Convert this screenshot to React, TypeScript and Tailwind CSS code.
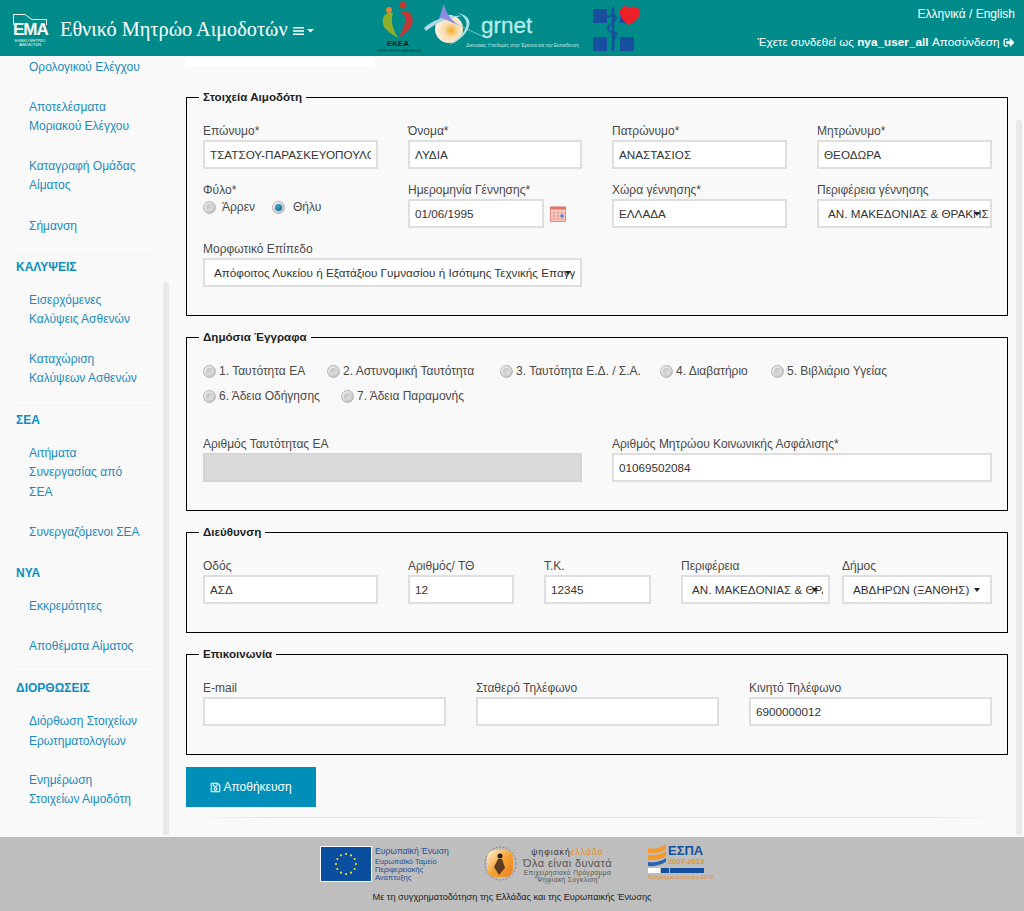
import React from "react";
import { FaRegSave, FaSignOutAlt } from "react-icons/fa";

const SideHead = ({ t, cls }: { t: string; cls: string }) => (
  <div className={`font-bold text-[12px] leading-[18px] text-[#0a8fc0] pl-[16px] ${cls}`}>{t}</div>
);
const SideLink = ({ lines, cls }: { lines: string[]; cls: string }) => (
  <div className={`pl-[29px] text-[12px] leading-[19.4px] text-[#1a8cbc] ${cls}`}>
    {lines.map((l) => (
      <div key={l}>{l}</div>
    ))}
  </div>
);
const Hr = ({ cls }: { cls: string }) => <div className={`ml-[15px] mr-[20px] h-px bg-white ${cls}`} />;

const Label = ({ children }: { children: React.ReactNode }) => (
  <div className="text-[12px] leading-[18px] text-[#4a4a4a] h-[18px] whitespace-nowrap">{children}</div>
);

const inputCls =
  "block w-full h-[29px] border-2 border-[#dedede] bg-white px-[5px] text-[11.7px] text-[#333] outline-none";

const Field = ({ label, value, cls = "" }: { label: string; value: string; cls?: string }) => (
  <div className={cls}>
    <Label>{label}</Label>
    <input readOnly value={value} className={inputCls} />
  </div>
);

const Sel = ({ label, value, cls = "", caretRight = 9, pad = 9, clip = 5 }: { label: string; value: string; cls?: string; caretRight?: number; pad?: number; clip?: number }) => (
  <div className={cls}>
    <Label>{label}</Label>
    <div className="relative h-[29px] border-2 border-[#dedede] bg-white text-[11.7px] leading-[25px] text-[#333]" style={{ paddingLeft: pad, paddingRight: clip }}>
      <div className="overflow-hidden whitespace-nowrap">{value}</div>
      <span
        className="absolute top-[11px] w-0 h-0 border-l-[3px] border-r-[3px] border-t-[4px] border-l-transparent border-r-transparent border-t-[#222]"
        style={{ right: caretRight }}
      />
    </div>
  </div>
);

const Radio = ({ on = false }: { on?: boolean }) => (
  <span className="inline-flex shrink-0 w-[13px] h-[13px] rounded-full items-center justify-center border border-[#b4b4b4] bg-[linear-gradient(135deg,#f4f4f4,#bcbcbc)]">
    <span
      className={
        on
          ? "w-[7px] h-[7px] rounded-full bg-[radial-gradient(circle_at_40%_35%,#3aa6d0,#0a5f85)]"
          : "w-[7px] h-[7px] rounded-full bg-[linear-gradient(135deg,#bdbdbd,#e6e6e6)]"
      }
    />
  </span>
);

const DocRadio = ({ t, w }: { t: string; w: string }) => (
  <div className={`flex items-center gap-[3px] text-[12px] text-[#4a4a4a] whitespace-nowrap ${w}`}>
    <Radio />
    <span>{t}</span>
  </div>
);

const Fs = ({ title, cls, children }: { title: string; cls: string; children: React.ReactNode }) => (
  <fieldset className={`border border-black pl-[16px] pr-[15px] ${cls}`}>
    <legend className="ml-[-4px] px-[4px] text-[11.6px] leading-[16px] font-bold text-[#222]">{title}</legend>
    {children}
  </fieldset>
);

const CalIcon = () => (
  <svg width="17" height="16" viewBox="0 0 17 16" className="shrink-0">
    <rect x="0.5" y="1.5" width="15" height="14" fill="#fbd8d0" stroke="#e08a80" />
    <rect x="0.5" y="0.5" width="15" height="3" fill="#e0705f" />
    <path d="M4 4v11M8 4v11M12 4v11M1 7h14M1 10h14M1 13h14" stroke="#ec9c90" strokeWidth="1" />
    <rect x="10.5" y="8.5" width="3" height="3" fill="#4a7fe0" />
  </svg>
);

const Ekea = () => (
  <svg width="44" height="54" viewBox="0 0 44 54" className="shrink-0">
    <g transform="translate(2 0)">
      <circle cx="10" cy="9" r="3" fill="#e9862c" />
      <circle cx="24" cy="4" r="3.5" fill="#c0392b" />
      <path d="M5 15c-4 8 1 15 14 22C14 27 11 21 14 12c-4-1-7 0-9 3z" fill="#8fae2a" />
      <path d="M19 37c11-6 17-13 14-22-2-5-8-6-12-3 4 1 6 4 5 9-1 6-4 11-7 16z" fill="#c23a3a" />
    </g>
    <text x="21" y="45" textAnchor="middle" fontFamily="Liberation Sans" fontWeight="700" fontSize="8" fill="#10201a">ΕΚΕΑ</text>
    <text x="22" y="51" textAnchor="middle" fontFamily="Liberation Sans" fontSize="3.2" fill="#10302a">ΕΘΝΙΚΟ ΚΕΝΤΡΟ ΑΙΜΟΔΟΣΙΑΣ</text>
  </svg>
);

const Grnet = () => (
  <svg width="160" height="50" viewBox="0 0 160 50" className="shrink-0">
    <defs>
      <radialGradient id="sun" cx="0.58" cy="0.55" r="0.55">
        <stop offset="0" stopColor="#f2a91e" />
        <stop offset="0.45" stopColor="#fbdcae" />
        <stop offset="1" stopColor="#fdf0e0" />
      </radialGradient>
    </defs>
    <circle cx="25" cy="28" r="14" fill="url(#sun)" />
    <path d="M0 27c8-8 25-13 38-12-14 2-26 7-36 15z" fill="#a8d8e8" />
    <path d="M20 3c2 10 8 18 19 23C26 22 19 15 15 18 17 12 18 7 20 3z" fill="#8c8ce0" />
    <path d="M34 12c10 2 14 8 10 16-3 6-9 12-19 16 9-6 15-12 17-18 2-6-2-11-8-14z" fill="#a8dfe8" />
    <path d="M30 22l30 14" stroke="#bfe8e8" strokeWidth="0.6" />
    <text x="57" y="32" fontFamily="Liberation Sans" fontSize="22.5" fill="#b6ecea" stroke="#b6ecea" strokeWidth="0.3">grnet</text>
    <text x="42" y="46" fontFamily="Liberation Sans" fontSize="4.7" fill="#c5e8e4">Δικτυακές Υποδομές στην Έρευνα και την Εκπαίδευση</text>
  </svg>
);

const Ministry = () => (
  <svg width="48" height="50" viewBox="0 0 48 50" className="shrink-0">
    <rect x="0" y="8" width="14" height="14" fill="#174f9e" />
    <rect x="27" y="8" width="14" height="14" fill="#174f9e" />
    <rect x="0" y="36" width="14" height="14" fill="#174f9e" />
    <rect x="27" y="36" width="14" height="14" fill="#174f9e" />
    <path d="M20 6v44" stroke="#174f9e" strokeWidth="2.5" />
    <path d="M14 16c8-4 12 0 6 5s-8 9 0 10-2 8 0 12" stroke="#174f9e" strokeWidth="2" fill="none" />
    <path d="M36 24c-5-4-9-7-9-13 0-5 6-8 9-4 3-2 11-2 11 4 0 6-6 10-11 13z" fill="#ee2027" />
  </svg>
);

const Footer = () => (
  <div className="h-[74px] bg-[#bebebe] flex flex-col items-center shrink-0">
    <div className="flex h-[38px] mt-[9px] w-[384px] items-start">
      <div className="w-[52px] h-[36px] bg-[#0a4ea0] border border-white flex items-center justify-center shrink-0">
        <svg width="26" height="26" viewBox="0 0 26 26">
          {Array.from({ length: 12 }).map((_, i) => (
            <circle key={i} cx={13 + 10 * Math.cos((i * Math.PI) / 6)} cy={13 + 10 * Math.sin((i * Math.PI) / 6)} r="1.1" fill="#f7e01a" />
          ))}
        </svg>
      </div>
      <div className="ml-[3px] w-[78px] shrink-0 text-[#1c4f96] leading-[8px] text-[7.5px]">
        <div className="text-[8.6px] leading-[10px] mb-[2px] whitespace-nowrap">Ευρωπαϊκή Ένωση</div>
        <div>Ευρωπαϊκό Ταμείο</div>
        <div>Περιφερειακής</div>
        <div>Ανάπτυξης</div>
      </div>
      <svg width="33" height="35" viewBox="0 0 33 35" className="ml-[31px] shrink-0">
        <defs>
          <linearGradient id="og" x1="0" y1="0" x2="1" y2="1">
            <stop offset="0" stopColor="#fff3e0" />
            <stop offset="0.5" stopColor="#f7a436" />
            <stop offset="1" stopColor="#e8801c" />
          </linearGradient>
        </defs>
        <ellipse cx="16.5" cy="17.5" rx="15.5" ry="16.5" fill="none" stroke="#666" strokeWidth="0.7" strokeDasharray="2 1.5" />
        <rect x="3" y="4" width="26" height="27" rx="8" fill="url(#og)" />
        <circle cx="16" cy="10" r="2.5" fill="#222" />
        <path d="M14 13h4l3 9-6 7-5-8z" fill="#5a3a20" />
      </svg>
      <div className="ml-[5px] w-[91px] shrink-0 text-center text-[#555] flex flex-col items-center">
        <div className="text-[8.6px] leading-[9px] mt-[2px] whitespace-nowrap tracking-[1px] text-[#333]">ψηφιακή<span className="text-[#e89020]">ελλάδα</span></div>
        <div className="text-[11px] leading-[12px] whitespace-nowrap tracking-[0.4px]">Όλα είναι δυνατά</div>
        <div className="text-[6.6px] leading-[7px] whitespace-nowrap tracking-[0.4px]">Επιχειρησιακό Πρόγραμμα</div>
        <div className="text-[6.6px] leading-[7px] whitespace-nowrap tracking-[0.4px]">"Ψηφιακή Σύγκλιση"</div>
      </div>
      <div className="ml-[35px] w-[56px] shrink-0 flex flex-col -mt-[2px]">
        <div className="flex items-start h-[23px]">
          <svg width="19" height="23" viewBox="0 0 19 23" className="shrink-0">
            <path d="M0 4c6 2 12 0 18-4v5C12 9 6 10 0 9z" fill="#f29a2e" />
            <path d="M0 11c6 1 12 0 18-4v5c-6 4-12 5-18 4z" fill="#f29a2e" />
            <path d="M0 18c6 1 12 0 18-4v4c-6 3-12 5-18 4z" fill="#2a66b0" />
          </svg>
          <div className="ml-[1px]">
            <div className="text-[13px] leading-[13px] font-bold text-[#14509f]">ΕΣΠΑ</div>
            <div className="text-[7.6px] leading-[9px] font-bold text-[#e89020] whitespace-nowrap">2007-2013</div>
          </div>
        </div>
        <div className="h-[5px] mt-[1px] flex gap-[1px]">
          <div className="w-[12px] bg-white" />
          <div className="w-[8px] bg-[#14509f]" />
          <div className="flex-1 bg-[#14509f]" />
        </div>
        <div className="text-[5px] leading-[7px] mt-[1px] text-[#e89020] whitespace-nowrap">Πρόγραμμα ανάπτυξης ΕΣΠΑ</div>
      </div>
    </div>
    <div className="mt-[6px] text-[9.2px] leading-[14px] text-[#222] whitespace-nowrap">Με τη συγχρηματοδότηση της Ελλάδας και της Ευρωπαικής Ένωσης</div>
  </div>
);

export default function App() {
  return (
    <div className="h-[911px] w-[1024px] overflow-hidden flex flex-col bg-[#f9f9f9] font-['Liberation_Sans',Arial,sans-serif]">
      <header className="h-[56px] shrink-0 bg-[#008b8b] flex text-white">
        <div className="w-[377px] shrink-0 flex items-start">
          <div className="relative ml-[13px] mt-[14px] w-[34px] h-[32px] shrink-0">
            <svg width="34" height="12" viewBox="0 0 34 12" className="absolute left-0 top-0">
              <path d="M0.5 11V0.5H12L19 5.5H33.5V11" fill="none" stroke="#fff" strokeWidth="1" />
            </svg>
            <div className="absolute left-0 top-[8px] w-[34px] text-center text-[17px] leading-[16px] font-bold tracking-[-1px]">EMA</div>
            <div className="absolute left-0 top-[26px] w-[34px] text-[3.6px] leading-[3.5px] text-center whitespace-nowrap">
              <div>ΕΘΝΙΚΟ ΜΗΤΡΩΟ</div>
              <div>ΑΙΜΟΔΟΤΩΝ</div>
            </div>
          </div>
          <div className="ml-[13px] mt-[16px] font-['Liberation_Serif',serif] text-[20.3px] leading-[26px] whitespace-nowrap">Εθνικό Μητρώο Αιμοδοτών</div>
          <svg width="21" height="10" viewBox="0 0 21 10" className="ml-[5px] mt-[26px] shrink-0">
            <path d="M0 1h11v1.6H0zM0 4.2h11v1.6H0zM0 7.4h11V9H0z" fill="#fff" />
            <path d="M14 3h7l-3.5 3.5z" fill="#fff" />
          </svg>
        </div>
        <div className="flex items-start w-[263px] shrink-0 pt-[1px]">
          <Ekea />
          <div className="ml-[3px]"><Grnet /></div>
          <div className="ml-[9px]"><Ministry /></div>
        </div>
        <div className="flex-1 flex flex-col items-end pr-[9px] text-[12px]">
          <div className="mt-[6px] leading-[16px] whitespace-nowrap">Ελληνικά / English</div>
          <div className="mt-[12px] leading-[16px] flex items-center whitespace-nowrap">
            <span className="text-[11.6px]">Έχετε συνδεθεί ως</span>&nbsp;<b className="text-[11.8px]">nya_user_all</b>&nbsp;<span className="text-[11.8px]">Αποσύνδεση</span>&nbsp;<FaSignOutAlt className="w-[12px] h-[11px]" />
          </div>
        </div>
      </header>

      <div className="flex-1 flex min-h-0">
        <aside className="w-[176px] shrink-0 relative overflow-hidden pt-[2px]">
          <SideLink lines={["Ορολογικού Ελέγχου"]} cls="" />
          <SideLink lines={["Αποτελέσματα", "Μοριακού Ελέγχου"]} cls="mt-[20.4px]" />
          <SideLink lines={["Καταγραφή Ομάδας", "Αίματος"]} cls="mt-[20.4px]" />
          <SideLink lines={["Σήμανση"]} cls="mt-[21px]" />
          <Hr cls="mt-[12.6px]" />
          <SideHead t="ΚΑΛΥΨΕΙΣ" cls="mt-[8px]" />
          <SideLink lines={["Εισερχόμενες", "Καλύψεις Ασθενών"]} cls="mt-[15px]" />
          <SideLink lines={["Καταχώριση", "Καλύψεων Ασθενών"]} cls="mt-[20.4px]" />
          <Hr cls="mt-[13px]" />
          <SideHead t="ΣΕΑ" cls="mt-[8px]" />
          <SideLink lines={["Αιτήματα", "Συνεργασίας από", "ΣΕΑ"]} cls="mt-[15px]" />
          <SideLink lines={["Συνεργαζόμενοι ΣΕΑ"]} cls="mt-[20.6px]" />
          <Hr cls="mt-[13px]" />
          <SideHead t="ΝΥΑ" cls="mt-[8px]" />
          <SideLink lines={["Εκκρεμότητες"]} cls="mt-[15px]" />
          <SideLink lines={["Αποθέματα Αίματος"]} cls="mt-[21px]" />
          <Hr cls="mt-[12.6px]" />
          <SideHead t="ΔΙΟΡΘΩΣΕΙΣ" cls="mt-[9px]" />
          <SideLink lines={["Διόρθωση Στοιχείων", "Ερωτηματολογίων"]} cls="mt-[15px]" />
          <SideLink lines={["Ενημέρωση", "Στοιχείων Αιμοδότη"]} cls="mt-[19.6px]" />
          <div className="absolute left-[163px] top-[226px] bottom-[2px] w-[6px] rounded-[3px] bg-[#e8e8e8]" />
        </aside>

        <main className="flex-1 relative min-w-0 pl-[10px] pr-[16px]">
          <div className="h-[10px] w-[190px] -ml-[1px] bg-white" />
          <Fs title="Στοιχεία Αιμοδότη" cls="mt-[23px] h-[227px]">
            <div className="grid grid-cols-[175px_174px_175px_175px] gap-x-[30px] gap-y-[12px] mt-[17px]">
              <Field label="Επώνυμο*" value="ΤΣΑΤΣΟΥ-ΠΑΡΑΣΚΕΥΟΠΟΥΛΟΥ" />
              <Field label="Όνομα*" value="ΛΥΔΙΑ" />
              <Field label="Πατρώνυμο*" value="ΑΝΑΣΤΑΣΙΟΣ" />
              <Field label="Μητρώνυμο*" value="ΘΕΟΔΩΡΑ" />
              <div>
                <Label>Φύλο*</Label>
                <div className="flex items-center text-[12px] leading-[16px] text-[#4a4a4a]">
                  <Radio />
                  <span className="ml-[6px]">Άρρεν</span>
                  <span className="ml-[17px]"><Radio on /></span>
                  <span className="ml-[8px]">Θήλυ</span>
                </div>
              </div>
              <div>
                <Label>Ημερομηνία Γέννησης*</Label>
                <div className="flex items-center">
                  <input readOnly value="01/06/1995" className={`${inputCls} !w-[136px]`} />
                  <span className="ml-[6px]"><CalIcon /></span>
                </div>
              </div>
              <Field label="Χώρα γέννησης*" value="ΕΛΛΑΔΑ" />
              <Sel label="Περιφέρεια γέννησης" value="ΑΝ. ΜΑΚΕΔΟΝΙΑΣ & ΘΡΑΚΗΣ" caretRight={10} clip={0} />
              <Sel cls="col-span-2" label="Μορφωτικό Επίπεδο" value="Απόφοιτος Λυκείου ή Εξατάξιου Γυμνασίου ή Ισότιμης Τεχνικής Επαγγελματικής Σχολής" />
            </div>
          </Fs>

          <Fs title="Δημόσια Έγγραφα" cls="mt-[13px] h-[182px]">
            <div className="flex mt-[18px] h-[16px]">
              <DocRadio t="1. Ταυτότητα ΕΑ" w="w-[124px]" />
              <DocRadio t="2. Αστυνομική Ταυτότητα" w="w-[173px]" />
              <DocRadio t="3. Ταυτότητα Ε.Δ. / Σ.Α." w="w-[160px]" />
              <DocRadio t="4. Διαβατήριο" w="w-[111px]" />
              <DocRadio t="5. Βιβλιάριο Υγείας" w="w-[130px]" />
            </div>
            <div className="flex mt-[9px] h-[16px]">
              <DocRadio t="6. Άδεια Οδήγησης" w="w-[138px]" />
              <DocRadio t="7. Άδεια Παραμονής" w="w-[140px]" />
            </div>
            <div className="grid grid-cols-[379px_380px] gap-x-[30px] mt-[31px]">
              <div>
                <Label>Αριθμός Ταυτότητας ΕΑ</Label>
                <div className="h-[29px] border-2 border-[#d4d4d4] bg-[#dadada]" />
              </div>
              <Field label="Αριθμός Μητρώου Κοινωνικής Ασφάλισης*" value="01069502084" />
            </div>
          </Fs>

          <Fs title="Διεύθυνση" cls="mt-[13px] h-[109px]">
            <div className="flex mt-[17px]">
              <Field label="Οδός" value="ΑΣΔ" cls="w-[175px]" />
              <Field label="Αριθμός/ ΤΘ" value="12" cls="w-[106px] ml-[30px]" />
              <Field label="Τ.Κ." value="12345" cls="w-[107px] ml-[30px]" />
              <Sel label="Περιφέρεια" value="ΑΝ. ΜΑΚΕΔΟΝΙΑΣ & ΘΡΑΚΗΣ" cls="w-[149px] ml-[30px]" caretRight={10} />
              <Sel label="Δήμος" value="ΑΒΔΗΡΩΝ (ΞΑΝΘΗΣ)" cls="w-[150px] ml-[12px]" caretRight={10} />
            </div>
          </Fs>

          <Fs title="Επικοινωνία" cls="mt-[13px] h-[109px]">
            <div className="grid grid-cols-3 gap-x-[30px] mt-[17px]">
              <Field label="E-mail" value="" />
              <Field label="Σταθερό Τηλέφωνο" value="" />
              <Field label="Κινητό Τηλέφωνο" value="6900000012" />
            </div>
          </Fs>

          <div className="mt-[12px] w-[130px] h-[40px] bg-[#008fb9] text-white text-[12px] flex items-center justify-center">
            <FaRegSave className="w-[11px] h-[11px] mr-[2px]" />Αποθήκευση
          </div>
          <div className="mt-[10px] -ml-[16px] mr-[8px] h-px bg-[linear-gradient(90deg,#ffffff,#e2e2e2_12%,#e2e2e2_90%,#f9f9f9)]" />
          <div className="absolute right-[2px] top-[64px] bottom-[2px] w-[6px] rounded-[3px] bg-[#e8e8e8]" />
        </main>
      </div>

      <Footer />
    </div>
  );
}
